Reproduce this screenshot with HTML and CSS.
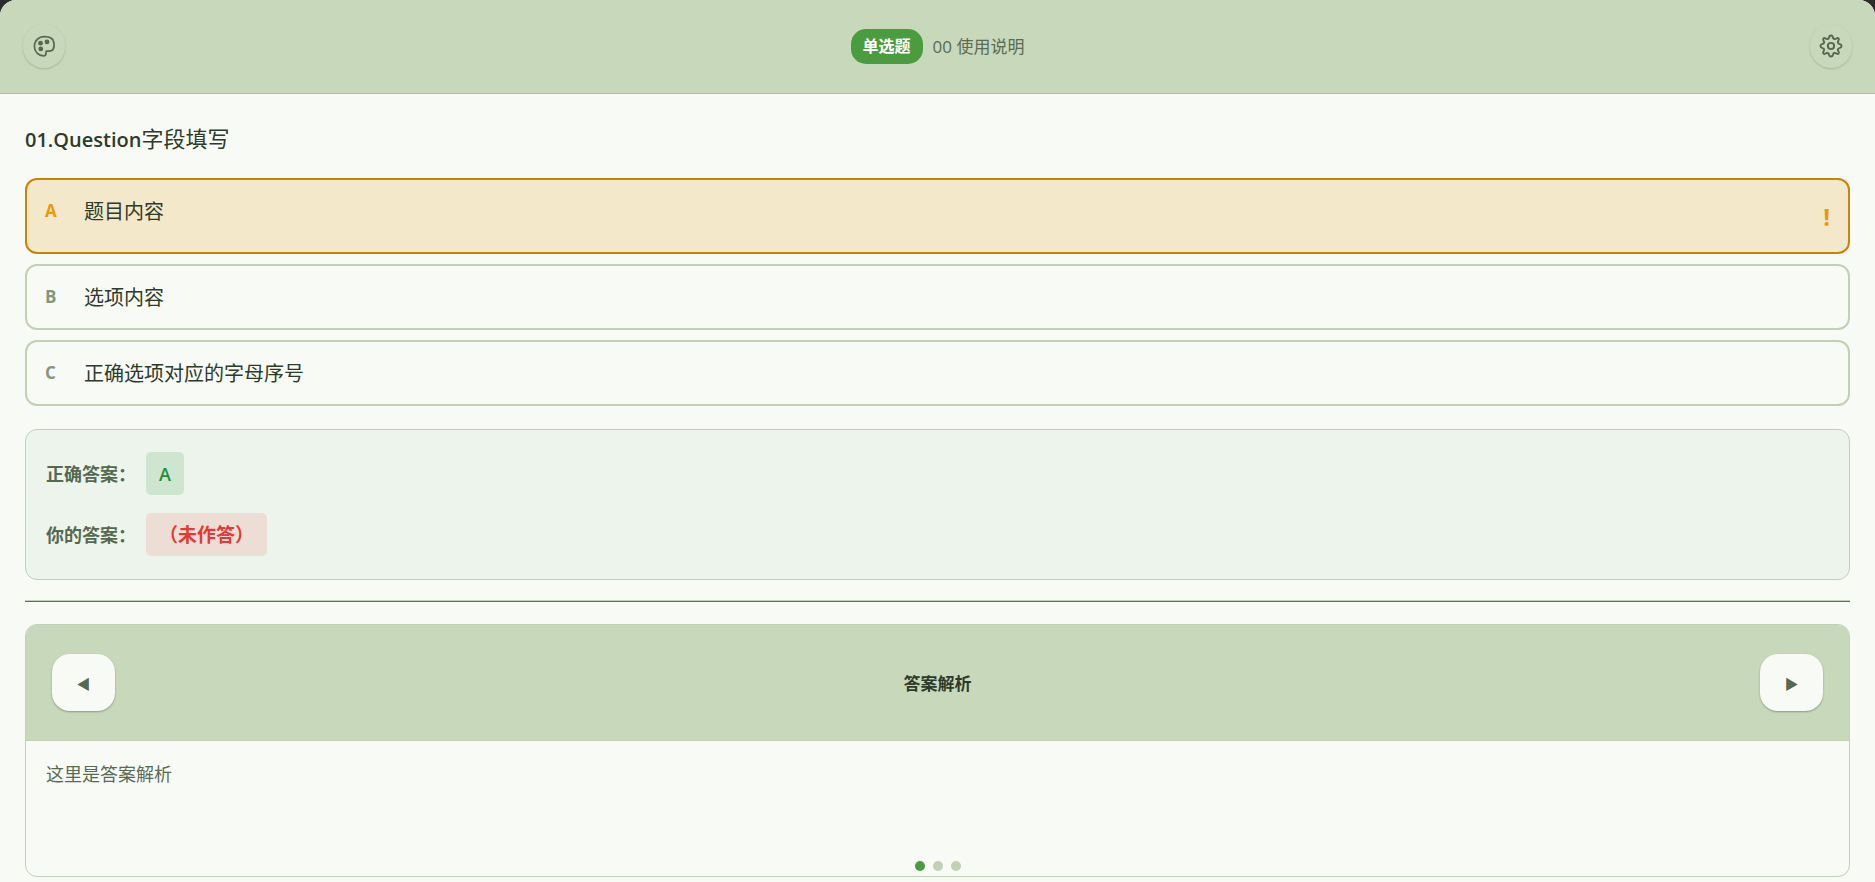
FILE: index.html
```html
<!DOCTYPE html>
<html lang="zh-CN">
<head>
  <meta charset="UTF-8" />
  <meta name="viewport" content="width=device-width, initial-scale=1.0"/>
  <title>00 使用说明</title>
  <link rel="stylesheet" href="styles.css">
</head>
<body>
  <div class="card">
    <header class="toolbar">
      <button class="icon-btn" id="themeBtn" type="button" aria-label="主题">
        <svg viewBox="0 0 24 24" width="24" height="24" fill="none" stroke="currentColor" stroke-width="1.7" stroke-linejoin="round">
          <path d="M12.500 2.600C6.600 2.600 2.400 6.600 2.400 12.300C2.400 17.900 6.500 21.800 11.500 21.800C13 21.800 13.800 21.200 13.900 20.100L14.200 17.100C17.600 17.200 19.900 17 21 15.400C22.100 13.800 22.200 10.500 21.800 8.300C21.100 4.300 17.700 2.600 12.500 2.600Z"/>
          <g fill="currentColor" stroke="none">
            <circle cx="8.500" cy="9.200" r="2.400"/>
            <circle cx="15" cy="7.900" r="2.400"/>
            <circle cx="8.800" cy="14.900" r="2.400"/>
          </g>
        </svg>
      </button>
      <div class="title">
        <span class="badge">单选题</span>
        <span class="deck">00 使用说明</span>
      </div>
      <button class="icon-btn" id="settingsBtn" type="button" aria-label="设置">
        <svg viewBox="0 0 24 24" width="26" height="26" fill="none" stroke="currentColor" stroke-width="1.800" stroke-linejoin="round">
          <circle cx="12" cy="12" r="2.900"/>
          <path d="M10.300 3.700C10.700 1.800 13.300 1.800 13.700 3.700C14 5.600 15.600 6.200 17 5.100C18.700 4.100 19.900 5.300 18.900 7C17.800 8.400 18.400 10 20.300 10.300C22.200 10.700 22.200 13.300 20.300 13.700C18.400 14 17.800 15.600 18.900 17C19.900 18.700 18.700 19.900 17 18.900C15.600 17.800 14 18.400 13.700 20.300C13.300 22.200 10.700 22.200 10.300 20.300C10 18.400 8.400 17.800 7 18.900C5.300 19.900 4.100 18.700 5.100 17C6.200 15.600 5.600 14 3.700 13.700C1.800 13.300 1.800 10.700 3.700 10.300C5.600 10 6.200 8.400 5.100 7C4.100 5.300 5.300 4.100 7 5.100C8.400 6.200 10 5.600 10.300 3.700Z"/>
        </svg>
      </button>
    </header>

    <main class="content">
      <h1 class="question"><span class="latin">01.Question</span>字段填写</h1>

      <div class="options">
        <button class="option missed" type="button">
          <span class="letter">A</span>
          <span class="text">题目内容</span>
          <span class="mark">!</span>
        </button>
        <button class="option" type="button">
          <span class="letter">B</span>
          <span class="text">选项内容</span>
        </button>
        <button class="option" type="button">
          <span class="letter">C</span>
          <span class="text">正确选项对应的字母序号</span>
        </button>
      </div>

      <section class="result">
        <div class="result-row">
          <span class="label">正确答案：</span>
          <span class="chip correct">A</span>
        </div>
        <div class="result-row">
          <span class="label">你的答案：</span>
          <span class="chip wrong">（未作答）</span>
        </div>
      </section>

      <hr class="divider">

      <section class="notes">
        <div class="notes-header">
          <button class="nav-btn" type="button" aria-label="上一页">◀</button>
          <h2>答案解析</h2>
          <button class="nav-btn" type="button" aria-label="下一页">▶</button>
        </div>
        <div class="notes-body">
          <p>这里是答案解析</p>
          <div class="dots">
            <span class="dot active"></span>
            <span class="dot"></span>
            <span class="dot"></span>
          </div>
        </div>
      </section>
    </main>
  </div>
</body>
</html>
```
FILE: styles.css
```css
* {
  box-sizing: border-box;
}

body {
  margin: 0;
  background-color: #2c2c2c;
  color: #2d3b2a;
  font-family: "Open Sans", "Noto Sans CJK SC", sans-serif;
  font-size: 18px;
}

button {
  font-family: inherit;
  cursor: pointer;
}

.card {
  min-height: 100vh;
  background-color: #f8faf5;
  border-radius: 16px 16px 0 0;
  overflow: hidden;
}

/* Toolbar */
.toolbar {
  display: flex;
  align-items: center;
  justify-content: space-between;
  height: 94px;
  padding: 0 23px 1px;
  background-color: #c8d8bb;
  border-bottom: 1px solid #a9c3a0;
}

.icon-btn {
  display: flex;
  align-items: center;
  justify-content: center;
  width: 42px;
  height: 44px;
  padding: 0;
  border: none;
  border-radius: 21px;
  background-color: #c8d8bb;
  color: #56694f;
  box-shadow: 0 1px 2px rgba(45, 59, 42, 0.22);
}

.title {
  display: flex;
  align-items: center;
  gap: 10px;
}

.badge {
  padding: 5px 12px;
  border-radius: 15px;
  background-color: #4a9c3f;
  color: #fff;
  font-size: 16px;
  font-weight: bold;
  line-height: 25px;
}

.deck {
  color: #5a6b54;
  font-size: 17px;
  line-height: 25px;
}

/* Question */
.content {
  padding: 26px 25px 5px;
}

.question {
  margin: 0 0 20px;
  font-size: 22px;
  font-weight: normal;
  line-height: 36px;
}

.question .latin {
  font-size: 20px;
  font-weight: 600;
}

.options {
  display: flex;
  flex-direction: column;
  gap: 10px;
}

.option {
  display: flex;
  align-items: flex-start;
  min-height: 66px;
  padding: 17px 18px 15px;
  border: 2px solid #c2d0b6;
  border-radius: 12px;
  background-color: #f8faf5;
  color: #2d3b2a;
  text-align: left;
}

.letter {
  width: 39px;
  color: #82977c;
  font-size: 17px;
  font-weight: bold;
  line-height: 28px;
}

.text {
  flex: 1;
  font-size: 20px;
  line-height: 30px;
}

.mark {
  font-size: 24px;
  font-weight: bold;
  line-height: 40px;
}

.option.missed {
  border-color: #c98306;
  background-color: #f4e8cb;
}

.missed .letter,
.missed .mark {
  color: #e89b05;
}

/* Result */
.result {
  display: flex;
  flex-direction: column;
  gap: 18px;
  margin-top: 23px;
  padding: 22px 20px 23px;
  border: 1px solid #c2d0b6;
  border-radius: 12px;
  background-color: #edf4ec;
}

.result-row {
  display: flex;
  align-items: center;
  gap: 10px;
}

.label {
  color: #56694f;
  font-weight: bold;
  line-height: 24px;
}

.chip {
  padding: 7px 13px 5px;
  border-radius: 5px;
  font-weight: 600;
  line-height: 31px;
}

.chip.correct {
  background-color: #cee6d0;
  color: #1e8e36;
}

.chip.wrong {
  background-color: #ecddd5;
  color: #e53935;
  font-size: 19px;
}

.divider {
  height: 2px;
  margin: 20px 0 22px;
  border: none;
  border-top: 1px solid #c2d0b6;
  background-color: #64705f;
}

/* Notes */
.notes {
  border: 1px solid #c2d0b6;
  border-radius: 12px;
  overflow: hidden;
}

.notes-header {
  display: flex;
  align-items: center;
  justify-content: space-between;
  padding: 29px 26px;
  background-color: #c8d8bb;
  border-bottom: 1px solid #c2d0b6;
}

.notes-header h2 {
  margin: 0;
  font-size: 17px;
  font-weight: bold;
}

.nav-btn {
  width: 63px;
  height: 57px;
  padding: 0;
  border: none;
  border-radius: 18px;
  background-color: #f8faf5;
  color: #56694f;
  font-size: 14px;
  box-shadow: 0 1px 2px rgba(45, 59, 42, 0.4);
}

.notes-body {
  position: relative;
  min-height: 135px;
  padding: 18px 20px;
  color: #5a6b54;
}

.notes-body p {
  margin: 0;
  line-height: 30px;
}

.dots {
  position: absolute;
  bottom: 5px;
  left: 50%;
  display: flex;
  gap: 8px;
  transform: translateX(-50%);
}

.dot {
  width: 10px;
  height: 10px;
  border-radius: 50%;
  background-color: #c2d0b6;
}

.dot.active {
  background-color: #4a9c3f;
}
```
